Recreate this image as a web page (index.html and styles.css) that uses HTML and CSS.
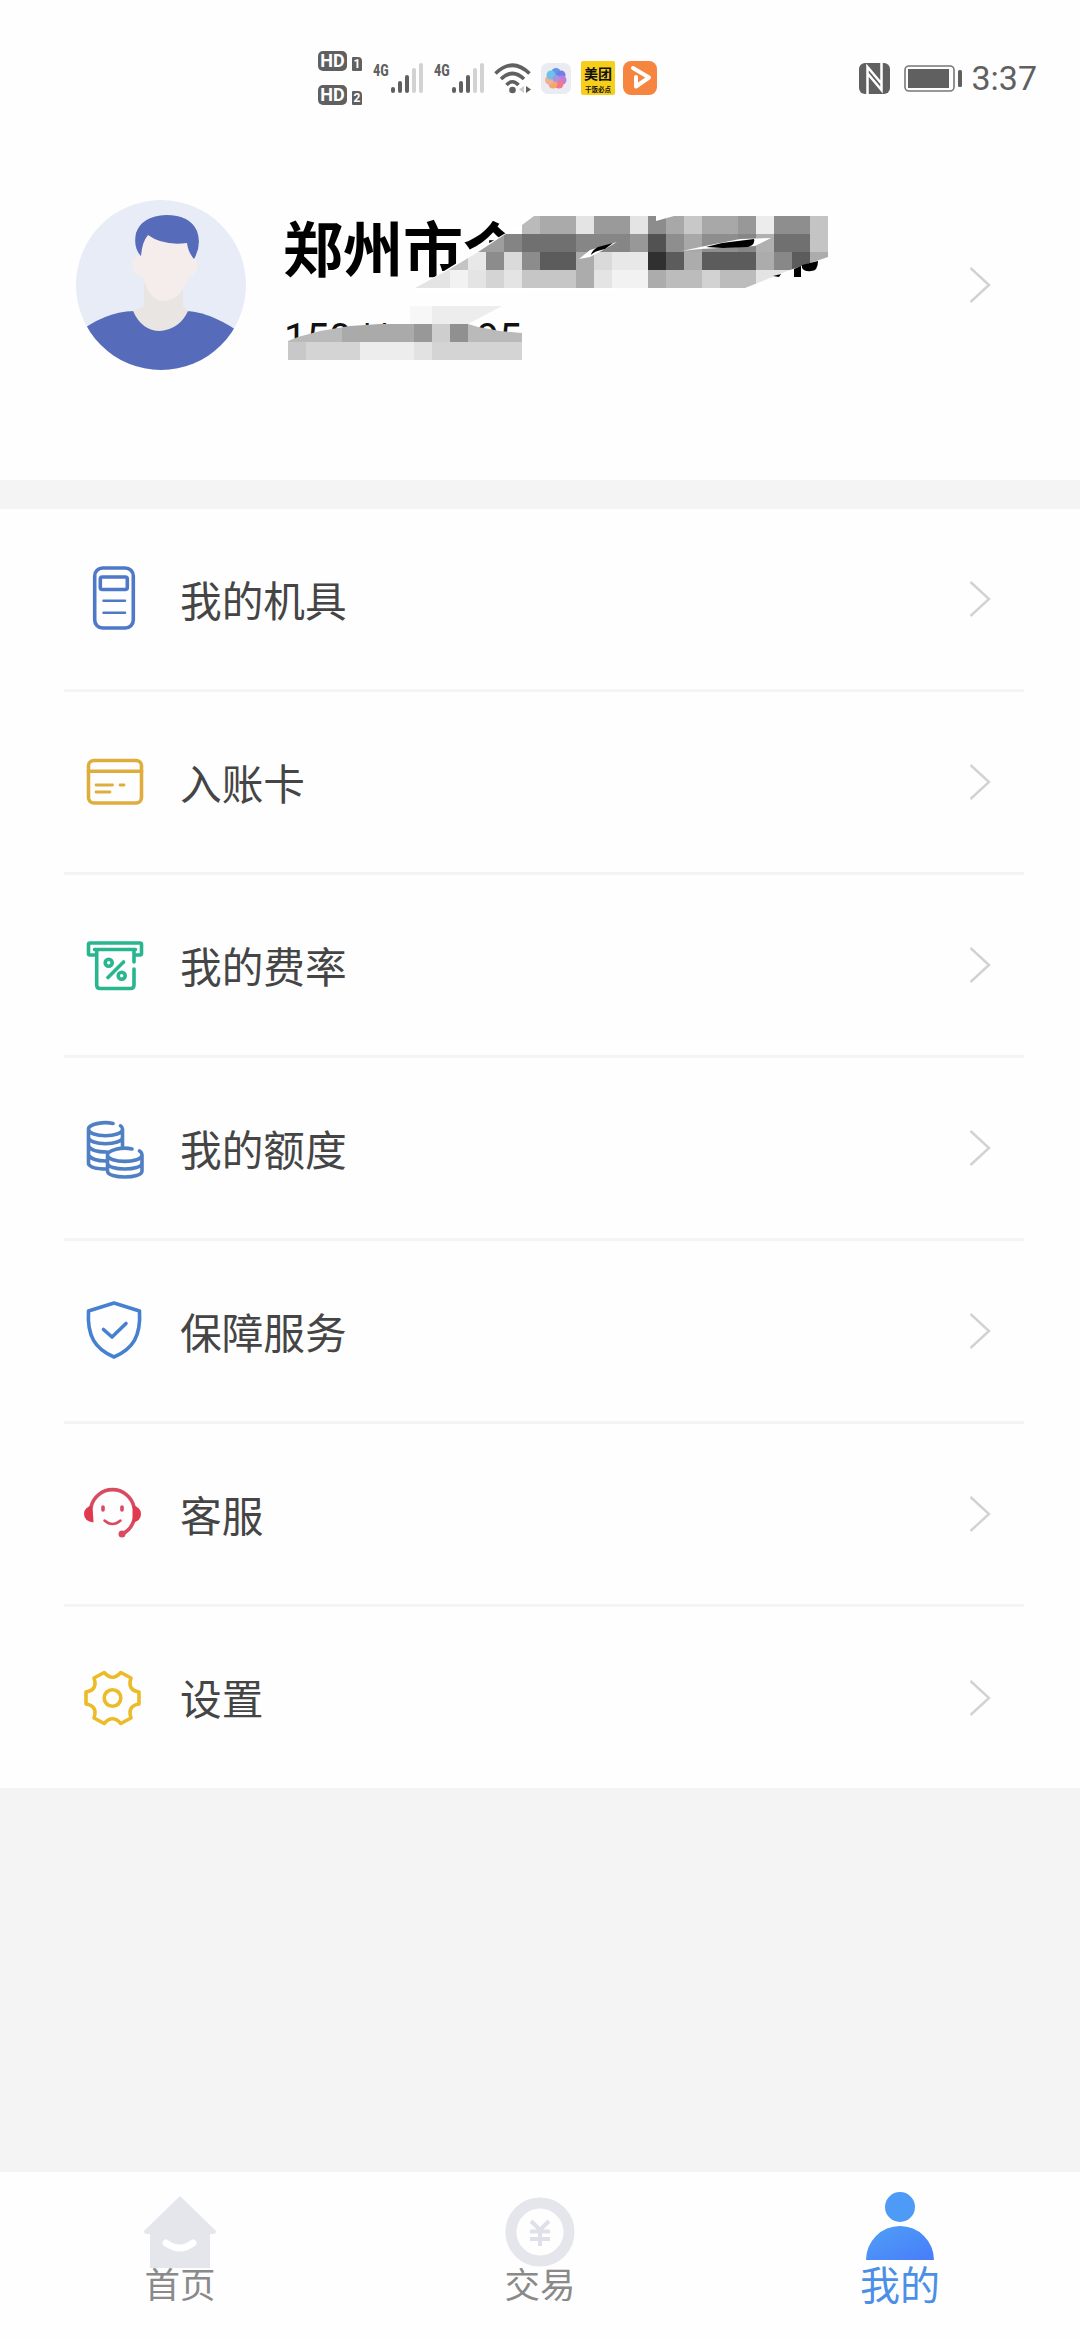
FILE: index.html
```html
<!DOCTYPE html>
<html lang="zh-CN">
<head>
<meta charset="utf-8">
<title>我的</title>
<link rel="stylesheet" href="styles.css">
</head>
<body>
<div class="screen">
  <header class="status">
    <div class="status-left">
      <div class="hd-col">
        <div class="hd"><b class="hd-tag">HD</b><b class="hd-num">1</b></div>
        <div class="hd"><b class="hd-tag">HD</b><b class="hd-num">2</b></div>
      </div>
      <div class="cell"><span class="net">4G</span><svg class="bars" viewBox="0 0 34 32"><g fill="#606060"><rect x="1" y="25" width="4" height="6" rx="2"/><rect x="8" y="19" width="4" height="12" rx="2"/><rect x="15" y="13" width="4" height="18" rx="2"/></g><g fill="#d2d2d2"><rect x="22" y="6" width="4" height="25" rx="2"/><rect x="29" y="1" width="4" height="30" rx="2"/></g></svg></div>
      <div class="cell"><span class="net">4G</span><svg class="bars" viewBox="0 0 34 32"><g fill="#606060"><rect x="1" y="25" width="4" height="6" rx="2"/><rect x="8" y="19" width="4" height="12" rx="2"/><rect x="15" y="13" width="4" height="18" rx="2"/></g><g fill="#d2d2d2"><rect x="22" y="6" width="4" height="25" rx="2"/><rect x="29" y="1" width="4" height="30" rx="2"/></g></svg></div>
      <svg class="wifi" viewBox="0 0 38 32"><g fill="none" stroke="#606060" stroke-width="3.6"><path d="M1.500 11.500Q18.500-5 35.500 11.500"/><path d="M7 17Q18.500 6 30 17"/><path d="M12.500 23Q18.500 16.500 24.500 23"/></g><circle cx="18.500" cy="28" r="3.300" fill="#606060"/><path d="M30 24V31L25 27.500Z" fill="#ccc"/><path d="M32 24V31L37 27.500Z" fill="#606060"/></svg>
      <svg class="app gallery" viewBox="0 0 30 31"><rect width="30" height="31" rx="7" fill="#ebebf2"/><g opacity=".85"><circle cx="15" cy="9.500" r="4.500" fill="#4a86ee"/><circle cx="20" cy="12" r="4.500" fill="#5a6ce8"/><circle cx="21" cy="17" r="4.500" fill="#b86ad8"/><circle cx="18" cy="21" r="4.500" fill="#f0647c"/><circle cx="12" cy="21" r="4.500" fill="#f59a58"/><circle cx="8.500" cy="17" r="4.500" fill="#f0a884"/><circle cx="10" cy="12" r="4.500" fill="#58bce6"/><circle cx="15" cy="15.500" r="3.500" fill="#9a88dc"/></g></svg>
      <div class="meituan"><span>美团</span><small>干饭必点</small></div>
      <svg class="app" viewBox="0 0 34 34"><rect width="34" height="34" rx="8" fill="#f5853f"/><path d="M10 7L26 16.500L13 25.500V16" fill="none" stroke="#fff" stroke-width="4" stroke-linecap="round" stroke-linejoin="round"/></svg>
    </div>
    <div class="status-right">
      <svg class="nfc" viewBox="0 0 31 31"><rect width="31" height="31" rx="6" fill="#606060"/><path d="M8.500 31V4L22 20M9 11L22.500 27V0" fill="none" stroke="#fff" stroke-width="2.500"/></svg>
      <svg class="battery" viewBox="0 0 58 27"><rect x="1" y="1" width="49" height="25" rx="4" fill="none" stroke="#777" stroke-width="1.600"/><rect x="4" y="4" width="41" height="19" fill="#606060"/><rect x="54" y="5" width="4" height="17" rx="1.500" fill="#606060"/></svg>
      <span class="time">3:37</span>
    </div>
  </header>

  <section class="profile">
    <svg class="avatar" viewBox="76 200 170 170">
      <defs><clipPath id="face"><circle cx="161" cy="285" r="85"/></clipPath></defs>
      <g clip-path="url(#face)">
        <rect x="76" y="200" width="170" height="170" fill="#e8ecf6"/>
        <path d="M70 340Q100 312 134 311L187 311Q216 313 250 340V380H70Z" fill="#566bb9"/>
        <path d="M133 311Q142 331 160 331Q180 329 188 311L183 306V282H144V306Z" fill="#e9e5e3"/>
        <path d="M141 236H193V257Q199 258 197 268Q194 277 188 278Q181 300 164 301Q150 301 143 278Q133 275 132 265Q131 257 141 256Z" fill="#f5ecec"/>
        <path d="M141 256Q133 248 136 233Q142 216 166 215Q190 215 197 231Q202 245 194 259Q188 252 187 243Q163 246 148 235Q142 242 141 256Z" fill="#566bb9"/>
      </g>
    </svg>
    <div class="who">
      <div class="name">郑州市个</div>
      <div class="phone"><span>150</span><span class="stars">**</span><span class="tail">95</span></div>
    </div>
    <svg class="arrow" viewBox="0 0 22 36"><path d="M1.500 1L20 18L1.500 35"/></svg>
    <svg class="mosaic" viewBox="270 200 576 180">
      <defs>
        <clipPath id="upper"><path clip-rule="evenodd" d="M415 288L450 269L478 252L504 235L522 225L534 216H656V221L674 216H828V257L790 270L745 288ZM579 259L590 250L617 242L605 249L590 257ZM682 251L705 246L740 239L771 238L755 246L720 248L700 249Z"/></clipPath>
        <clipPath id="lower"><path d="M410 324V306H502L468 324L478 327L500 331L522 333V360H288V341L298 337L320 331L350 326L380 324Z"/></clipPath>
      </defs>
      <path fill="#fff" d="M410 292L478 250L504 234L522 225L534 216H656V221L674 216H828V257L790 270L745 288Z"/>
      <g clip-path="url(#upper)" shape-rendering="crispEdges">
        <g><path fill="#bababa" d="M522 216h18v18h-18z"/><path fill="#aaa" d="M540 216h36v18h-36z"/><path fill="#e4e4e4" d="M576 216h18v18h-18zM630 216h18v18h-18z"/><path fill="#9a9a9a" d="M594 216h36v18h-36z"/><path fill="#8c8c8c" d="M648 216h18v18h-18z"/><path fill="#a8a8a8" d="M666 216h18v18h-18zM702 216h36v18h-36z"/><path fill="#c8c8c8" d="M684 216h18v18h-18z"/><path fill="#989898" d="M738 216h18v18h-18z"/><path fill="#ececec" d="M756 216h18v18h-18z"/><path fill="#8e8e8e" d="M774 216h36v18h-36z"/><path fill="#c4c4c4" d="M810 216h18v36h-18z"/></g>
        <g><path fill="#9e9e9e" d="M468 234h36v18h-36z"/><path fill="#848484" d="M504 234h18v18h-18z"/><path fill="#707070" d="M522 234h54v18h-54zM774 234h36v18h-36z"/><path fill="#868686" d="M576 234h54v18h-54zM738 234h18v18h-18z"/><path fill="#989898" d="M630 234h18v18h-18z"/><path fill="#525252" d="M648 234h18v18h-18z"/><path fill="#8e8e8e" d="M666 234h18v18h-18zM702 234h36v18h-36z"/><path fill="#a8a8a8" d="M684 234h18v18h-18z"/><path fill="#b0b0b0" d="M756 234h18v18h-18z"/></g>
        <g><path fill="#c4c4c4" d="M432 252h36v18h-36z"/><path fill="#e8e8e8" d="M468 252h18v18h-18zM612 252h36v18h-36z"/><path fill="#8c8c8c" d="M486 252h18v18h-18zM522 252h18v18h-18z"/><path fill="#dadada" d="M504 252h18v18h-18zM594 252h18v18h-18z"/><path fill="#5c5c5c" d="M540 252h36v18h-36zM666 252h18v18h-18zM702 252h54v18h-54zM792 252h18v18h-18z"/><path fill="#acacac" d="M576 252h18v18h-18zM684 252h18v18h-18zM756 252h18v18h-18zM810 252h18v18h-18z"/><path fill="#303030" d="M648 252h18v18h-18z"/><path fill="#888" d="M774 252h18v18h-18z"/></g>
        <g><path fill="#e4e4e4" d="M414 270h36v18h-36zM468 270h18v18h-18zM504 270h18v18h-18z"/><path fill="#f2f2f2" d="M450 270h18v18h-18zM612 270h36v18h-36z"/><path fill="#d4d4d4" d="M486 270h18v18h-18z"/><path fill="#c6c6c6" d="M522 270h54v18h-54z"/><path fill="#acacac" d="M576 270h18v18h-18zM648 270h18v18h-18z"/><path fill="#e4e4e4" d="M594 270h18v18h-18zM756 270h50v18h-50z"/><path fill="#bcbcbc" d="M666 270h36v18h-36zM720 270h36v18h-36z"/><path fill="#d2d2d2" d="M702 270h18v18h-18z"/></g>
      </g>
      <path d="M591 255Q592 250 598 247L613 243L605 249Q594 251 591 255ZM706 247L722 243L738 241L754 239Q756 244 748 247L723 248Z" fill="#000"/>
      <path d="M794 269L801 266V277H794ZM802 265L818 261Q818 271 811 271Q805 272 802 268ZM773 276L781 274L779 277Z" fill="#000"/>
      <g clip-path="url(#lower)" shape-rendering="crispEdges">
        <path fill="#f7f7f7" d="M410 306h22v18h-22z"/><path fill="#ededed" d="M432 306h72v18h-72z"/>
        <path fill="#bababa" d="M288 324h54v18h-54zM468 324h54v18h-54z"/><path fill="#aaa" d="M342 324h72v18h-72z"/><path fill="#989898" d="M414 324h18v18h-18z"/><path fill="#cecece" d="M432 324h18v18h-18z"/><path fill="#909090" d="M450 324h18v18h-18z"/>
        <path fill="#c8c8c8" d="M288 342h18v18h-18z"/><path fill="#d4d4d4" d="M306 342h54v18h-54zM432 342h90v18h-90z"/><path fill="#ededed" d="M360 342h54v18h-54z"/><path fill="#e2e2e2" d="M414 342h18v18h-18z"/>
      </g>
    </svg>
  </section>

  <main class="menu">
    <div class="row"><svg class="icon blue" viewBox="0 0 80 80"><rect x="20.700" y="9" width="38.600" height="60" rx="8"/><rect x="26.300" y="18" width="27" height="12.500" rx="2"/><path stroke-width="2.500" d="M29.500 41.700H51M29.500 53.800H51"/></svg><span class="label">我的机具</span><svg class="arrow" viewBox="0 0 22 36"><path d="M1.500 1L20 18L1.500 35"/></svg></div>
    <div class="row"><svg class="icon gold" viewBox="0 0 80 80"><rect x="14.500" y="18.500" width="53" height="42.500" rx="5.500"/><path d="M14.500 29.300H67.500"/><path stroke-width="2.800" d="M22 43H38.500M46 43H50M22 50H36"/></svg><span class="label">入账卡</span><svg class="arrow" viewBox="0 0 22 36"><path d="M1.500 1L20 18L1.500 35"/></svg></div>
    <div class="row"><svg class="icon green" viewBox="0 0 80 80"><path d="M21 30H16Q14.500 30 14.500 28.500V19.500Q14.500 18 16 18H66Q67.500 18 67.500 19.500V28.500Q67.500 30 66 30H61.500"/><path d="M20.500 24.500H61.500M22.700 24.500V60Q22.700 63.500 26 63.500H56.500Q60 63.500 60 60V44M60 24.500V37"/><circle cx="34.700" cy="37.800" r="3.500"/><circle cx="47.700" cy="50.800" r="3.500"/><path d="M34 52.500L49.500 37"/></svg><span class="label">我的费率</span><svg class="arrow" viewBox="0 0 22 36"><path d="M1.500 1L20 18L1.500 35"/></svg></div>
    <div class="row"><svg class="icon coin" viewBox="0 0 80 80"><path d="M39 15.500C29 13 14.500 16.500 14.500 21C14.500 30 48.500 30 48.500 21Q48.500 19 46.500 17.800M14.500 21V56Q17 61 32 61M48.500 21V38M14.500 29C14.500 38 48.500 38 48.500 29M14.500 38Q17 44 33 44M14.500 47Q18 53 32 53"/><path d="M58 41C48 38.500 33.500 42 33.500 47C33.500 55.500 68 55.500 68 47Q68 44.500 65.500 43M33.500 47V63C33.500 71 68 71 68 63V47M33.500 55C33.500 63 68 63 68 55"/></svg><span class="label">我的额度</span><svg class="arrow" viewBox="0 0 22 36"><path d="M1.500 1L20 18L1.500 35"/></svg></div>
    <div class="row"><svg class="icon sky" viewBox="0 0 80 80"><path d="M40 12L14.500 20C13 45 21 58 40 66C59 58 67 45 65.500 20Z"/><path d="M29.500 38.500L38 46L52 32.500"/></svg><span class="label">保障服务</span><svg class="arrow" viewBox="0 0 22 36"><path d="M1.500 1L20 18L1.500 35"/></svg></div>
    <div class="row"><svg class="icon red" viewBox="0 0 80 80"><path d="M17 33A22 22 0 0 1 60 33M60 46Q57 56 48 60"/><path d="M18.500 31.500Q10 33 10 40Q10 47 19.500 48.500ZM58.500 31.500Q67 33 67 40Q67 47 58.500 48.500Z" fill="#e03a50" stroke="none"/><circle cx="48" cy="60" r="3.500" fill="#dc4a62" stroke="none"/><path d="M29 33V36M48 33V36"/><path stroke-width="2.500" d="M30.500 46.500Q38.500 53.500 46.500 46.500"/></svg><span class="label">客服</span><svg class="arrow" viewBox="0 0 22 36"><path d="M1.500 1L20 18L1.500 35"/></svg></div>
    <div class="row"><svg class="icon yellow" viewBox="-38.500 -40 80 80"><path d="M26.500-6V6Q14.500 8 18.500 20L8.300 25.500Q0 16-8.300 25.500L-18.500 20Q-14.500 8-26.500 6V-6Q-14.500-8-18.500-20L-8.300-25.500Q0-16 8.300-25.500L18.500-20Q14.500-8 26.500-6Z"/><circle r="8.300"/></svg><span class="label">设置</span><svg class="arrow" viewBox="0 0 22 36"><path d="M1.500 1L20 18L1.500 35"/></svg></div>
  </main>

  <nav class="tabs">
    <div class="tab"><svg class="tab-icon" viewBox="0 0 80 76"><path d="M40 0L76 35Q76 38 73 38H70V72H10V38H7Q4 38 4 35Z" fill="#e5e5ec"/><path d="M26 47Q40 57 53 47" fill="none" stroke="#fff" stroke-width="7" stroke-linecap="round"/></svg><span>首页</span></div>
    <div class="tab"><svg class="tab-icon" viewBox="0 0 80 76"><circle cx="40" cy="36" r="29" fill="none" stroke="#e5e5ec" stroke-width="11"/><path d="M31 25L40 34L49 25M40 34V50M30 35.500H50M30 43H50" fill="none" stroke="#e0e0ea" stroke-width="4"/></svg><span>交易</span></div>
    <div class="tab active"><svg class="tab-icon" viewBox="0 0 80 76"><defs><linearGradient id="g" x1="0" y1="0" x2="1" y2="1"><stop offset="0" stop-color="#4fa0f5"/><stop offset="1" stop-color="#487cfb"/></linearGradient></defs><circle cx="40" cy="11" r="15" fill="#4d9af7"/><path d="M6 64A34 34 0 0 1 74 64Z" fill="url(#g)"/></svg><span>我的</span></div>
  </nav>
</div>
</body>
</html>
```
FILE: styles.css
```css
* { box-sizing: border-box; }
body { margin: 0; font-family: "Noto Sans CJK SC", sans-serif; background: #f4f4f4; }
svg { display: block; flex: none; overflow: visible; }
.screen { width: 1080px; height: 2340px; display: flex; flex-direction: column; }

.status { height: 156px; padding: 0 43px 0 318px; background: #fefefe; display: flex; justify-content: space-between; align-items: center; color: #606060; }
.status-left { display: flex; align-items: center; }
.hd-col { width: 55px; display: flex; flex-direction: column; gap: 14px; font-family: Roboto, sans-serif; color: #fff; }
.hd { display: flex; align-items: flex-end; gap: 5px; }
.hd-tag { width: 29px; height: 20px; border-radius: 5px; background: #606060; font-size: 18px; line-height: 20px; text-align: center; }
.hd-num { width: 10px; height: 14px; border-radius: 1px 4px 1px 1px; background: #606060; font-size: 12px; line-height: 14px; text-align: center; }
.cell { display: flex; width: 61px; align-items: flex-start; }
.net { width: 17px; font: 700 17px/17px "Roboto Condensed", Roboto, sans-serif; transform: scaleX(.85); transform-origin: left; }
.bars { width: 34px; height: 32px; }
.wifi { width: 38px; height: 32px; margin: 0 9px 0 -1px; }
.app { width: 34px; height: 34px; }
.gallery { width: 30px; height: 31px; }
.meituan { width: 34px; height: 34px; margin: 0 8px 0 10px; border-radius: 2px; background: #f7ce1a; color: #111; display: flex; flex-direction: column; align-items: center; overflow: hidden; }
.meituan span { font-weight: 700; font-size: 14px; line-height: 25px; }
.meituan small { font-weight: 700; font-size: 6.500px; line-height: 7px; }
.status-right { display: flex; align-items: center; }
.nfc { width: 31px; height: 31px; margin-right: 14px; }
.battery { width: 58px; height: 27px; margin-right: 9px; }
.time { font: 400 34px/40px Roboto, sans-serif; }

.profile { position: relative; height: 324px; padding: 44px 89px 0 76px; background: #fefefe; display: flex; }
.avatar { width: 170px; height: 170px; }
.who { flex: 1; padding: 6px 0 0 37px; }
.name { font-weight: 700; font-size: 60px; line-height: 80px; color: #000; }
.phone { display: flex; padding: 29px 0 0 1px; font: 400 40px/48px Roboto, sans-serif; color: #111; }
.stars { padding-left: 7px; width: 125px; }
.profile .arrow { margin-top: 67px; }
.mosaic { position: absolute; left: 270px; top: 44px; width: 576px; height: 180px; }
.arrow { width: 22px; height: 36px; fill: none; stroke: #d2d2d2; stroke-width: 2.400; }

.menu { margin-top: 29px; padding: 0 56px 0 64px; background: #fefefe; }
.row { height: 183px; padding: 0 33px 0 10px; border-bottom: 3px solid #f4f4f4; display: flex; align-items: center; }
.row:last-child { height: 181px; border-bottom: 0; }
.icon { width: 80px; height: 80px; fill: none; stroke-width: 3.600; stroke-linecap: round; stroke-linejoin: round; }
.blue { stroke: #4f79c8; }
.gold { stroke: #dfad3e; }
.green { stroke: #28b590; }
.coin { stroke: #5080c4; }
.sky { stroke: #4581cf; }
.red { stroke: #d84c62; }
.yellow { stroke: #ebbb28; }
.label { flex: 1; padding-left: 26px; margin-top: -1px; font-size: 41.700px; line-height: 60px; color: #454545; }

.tabs { height: 168px; margin-top: auto; padding-top: 24px; background: #fefefe; display: grid; grid-template-columns: repeat(3, 1fr); }
.tab { display: flex; flex-direction: column; align-items: center; font-size: 35.500px; line-height: 48px; color: #8a8a8a; }
.tab-icon { width: 80px; height: 76px; margin-bottom: -12px; }
.tab span { margin-top: -1px; }
.active { font-size: 40px; color: #4b90e6; }
```
